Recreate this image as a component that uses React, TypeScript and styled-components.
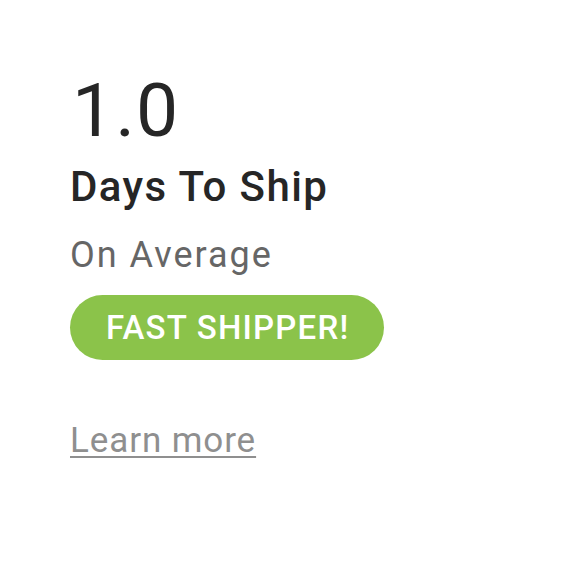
import React from 'react';
import styled, { createGlobalStyle } from 'styled-components';

const GlobalStyle = createGlobalStyle`
  html, body {
    margin: 0;
    padding: 0;
    background: #fff;
  }
  body {
    font-family: Roboto, 'Noto Sans', sans-serif;
  }
`;

const Card = styled.div`
  display: flex;
  flex-direction: column;
  align-items: flex-start;
  padding: 68px 0 0 70px;
`;

const Value = styled.div`
  font-size: 75px;
  font-weight: 400;
  line-height: 84px;
  letter-spacing: 1px;
  color: #262626;
  margin-left: 2px;
`;

const Title = styled.div`
  font-size: 42px;
  font-weight: 500;
  line-height: 48px;
  letter-spacing: 1.4px;
  color: #262626;
  margin-top: 11px;
`;

const Subtitle = styled.div`
  font-size: 36px;
  font-weight: 400;
  line-height: 42px;
  letter-spacing: 2px;
  color: #666666;
  margin-top: 23px;
`;

const Badge = styled.div`
  display: flex;
  align-items: center;
  justify-content: center;
  height: 65px;
  padding: 0 35px 0 36px;
  border-radius: 33px;
  background: #8bc34a;
  color: #fff;
  font-size: 33px;
  font-weight: 500;
  letter-spacing: 1.2px;
  margin-top: 19px;
`;

const LearnMore = styled.a`
  font-size: 35px;
  line-height: 40px;
  letter-spacing: 0.9px;
  color: #8f8f8f;
  text-decoration: underline;
  text-decoration-thickness: 2px;
  text-underline-offset: 4px;
  margin-top: 61px;
  cursor: pointer;
`;

export default function App() {
  return (
    <>
      <GlobalStyle />
      <Card>
        <Value>1.0</Value>
        <Title>Days To Ship</Title>
        <Subtitle>On Average</Subtitle>
        <Badge>FAST SHIPPER!</Badge>
        <LearnMore>Learn more</LearnMore>
      </Card>
    </>
  );
}
